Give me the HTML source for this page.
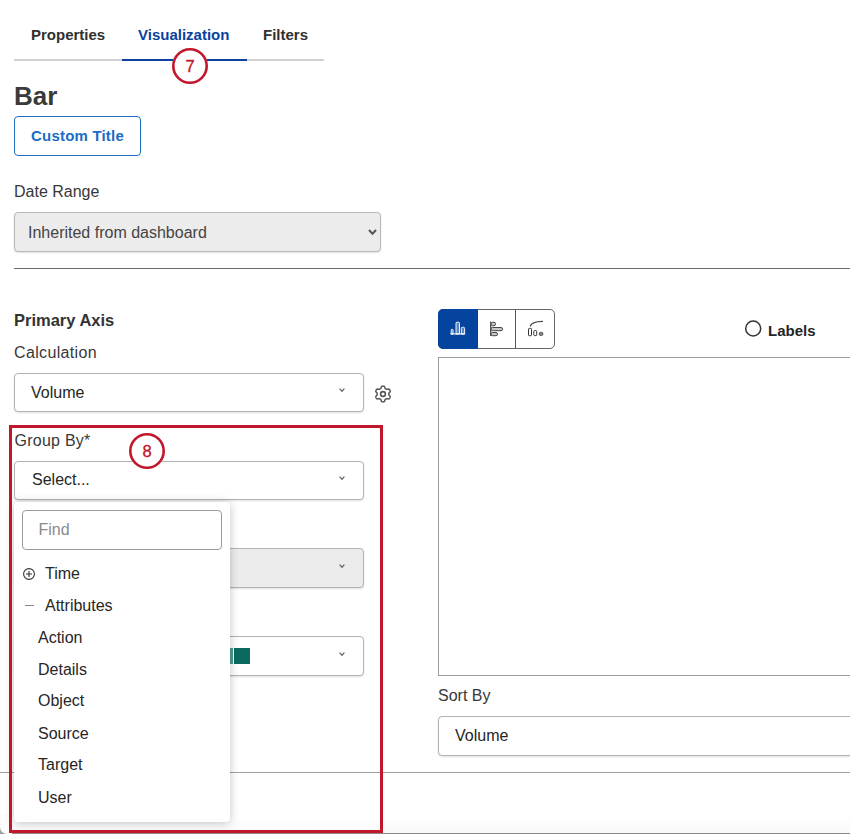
<!DOCTYPE html>
<html><head><meta charset="utf-8">
<style>
*{box-sizing:border-box;margin:0;padding:0}
html,body{width:850px;height:834px;overflow:hidden;background:#fff}
body{position:relative;font-family:"Liberation Sans",sans-serif;color:#333}
.a{position:absolute;white-space:nowrap;line-height:20px}
.tab{font-size:15px;font-weight:bold;color:#303030;top:25px}
.t16{font-size:16px;color:#383838}
.box{position:absolute;border:1px solid #b3b3b3;border-radius:4px;background:#fff;box-shadow:0 1px 2px rgba(0,0,0,.12)}
.badge{position:absolute;width:36px;height:36px;border-radius:50%;background:#fff;color:#c1172c;font-size:16.5px;text-align:center;line-height:37px;-webkit-text-stroke:0.35px #c1172c}
.badge svg{left:0;top:0}
.it{position:absolute;font-size:16px;color:#262626;left:38px;line-height:20px;white-space:nowrap}
svg{position:absolute;overflow:visible}
</style></head><body>
<!-- bottom -->
<div class="a" style="left:0;top:816px;width:850px;height:17px;background:linear-gradient(#fff,#f9f9f9)"></div>
<div class="a" style="left:0;top:833px;width:850px;height:1px;background:#8a8a8a"></div>
<div class="a" style="left:0;top:827px;width:10px;height:7px;background:#a0a0a0"></div>
<div class="a" style="left:0;top:814px;width:12px;height:19.5px;background:#fcfcfc;border-bottom-left-radius:7px"></div>
<!-- tabs -->
<div class="a tab" style="left:31px">Properties</div>
<div class="a tab" style="left:138px;color:#0a429c">Visualization</div>
<div class="a tab" style="left:263px">Filters</div>
<div class="a" style="left:14px;top:59px;width:310px;height:2px;background:#d2d2d2"></div>
<div class="a" style="left:122px;top:59px;width:125px;height:2px;background:#0a429c"></div>
<div class="badge" style="left:172px;top:48px"><svg width="36" height="36"><circle cx="18" cy="18" r="16.7" fill="none" stroke="#c1172c" stroke-width="2.6"/></svg>7</div>

<div class="a" style="left:14px;top:81px;font-size:26px;line-height:30px;font-weight:bold;color:#3a3a3a">Bar</div>
<div class="a" style="left:14px;top:116px;width:127px;height:40px;border:1px solid #1f6fc5;border-radius:4px"></div>
<div class="a" style="left:31px;top:126px;font-size:15px;font-weight:bold;color:#1a6cc4;letter-spacing:0.2px">Custom Title</div>

<div class="a t16" style="left:14px;top:182px">Date Range</div>
<div class="box" style="left:14px;top:212px;width:367px;height:40px;background:#ececec;border-color:#b8b8b8"></div>
<div class="a t16" style="left:28px;top:222.5px;color:#444">Inherited from dashboard</div>
<svg style="left:368px;top:229px" width="10" height="7"><polyline points="1,1 4.5,4.8 8,1" fill="none" stroke="#555" stroke-width="2"/></svg>

<div class="a" style="left:14px;top:268px;width:836px;height:1px;background:#6a6a6a"></div>

<div class="a" style="left:14px;top:310px;font-size:16.5px;font-weight:bold;color:#333">Primary Axis</div>
<div class="a t16" style="left:14px;top:343px;letter-spacing:0.35px">Calculation</div>
<div class="box" style="left:14px;top:373px;width:350px;height:39px"></div>
<div class="a t16" style="left:31px;top:382.7px;color:#262626">Volume</div>
<svg style="left:338.5px;top:388px" width="7" height="5"><polyline points="0.6,0.6 3,3.2 5.4,0.6" fill="none" stroke="#666" stroke-width="1.3"/></svg>
<svg style="left:383px;top:394px" width="1" height="1"><path d="M0.00,7.85 L-0.41,7.83 L-0.82,7.78 L-1.21,7.64 L-1.55,7.29 L-1.77,6.62 L-1.93,5.94 L-2.14,5.57 L-2.39,5.37 L-2.66,5.22 L-2.92,5.07 L-3.19,4.91 L-3.46,4.76 L-3.76,4.64 L-4.18,4.64 L-4.84,4.84 L-5.54,4.99 L-6.01,4.87 L-6.33,4.60 L-6.58,4.27 L-6.80,3.93 L-6.99,3.56 L-7.14,3.18 L-7.22,2.77 L-7.09,2.30 L-6.62,1.77 L-6.11,1.30 L-5.90,0.93 L-5.85,0.61 L-5.85,0.31 L-5.85,0.00 L-5.85,-0.31 L-5.85,-0.61 L-5.90,-0.93 L-6.11,-1.30 L-6.62,-1.77 L-7.09,-2.30 L-7.22,-2.77 L-7.14,-3.18 L-6.99,-3.56 L-6.80,-3.92 L-6.58,-4.27 L-6.33,-4.60 L-6.01,-4.87 L-5.54,-4.99 L-4.84,-4.84 L-4.18,-4.64 L-3.76,-4.64 L-3.46,-4.76 L-3.19,-4.91 L-2.92,-5.07 L-2.66,-5.22 L-2.39,-5.37 L-2.14,-5.57 L-1.93,-5.94 L-1.77,-6.62 L-1.55,-7.29 L-1.21,-7.64 L-0.82,-7.78 L-0.41,-7.83 L-0.00,-7.85 L0.41,-7.83 L0.82,-7.78 L1.21,-7.64 L1.55,-7.29 L1.77,-6.62 L1.93,-5.94 L2.14,-5.57 L2.39,-5.37 L2.66,-5.22 L2.92,-5.07 L3.19,-4.91 L3.46,-4.76 L3.76,-4.64 L4.18,-4.64 L4.84,-4.84 L5.54,-4.99 L6.01,-4.87 L6.33,-4.60 L6.58,-4.27 L6.80,-3.93 L6.99,-3.56 L7.14,-3.18 L7.22,-2.77 L7.09,-2.30 L6.62,-1.77 L6.11,-1.30 L5.90,-0.93 L5.85,-0.61 L5.85,-0.31 L5.85,-0.00 L5.85,0.31 L5.85,0.61 L5.90,0.93 L6.11,1.30 L6.62,1.77 L7.09,2.30 L7.22,2.77 L7.14,3.18 L6.99,3.56 L6.80,3.92 L6.58,4.27 L6.33,4.60 L6.01,4.87 L5.54,4.99 L4.84,4.84 L4.18,4.64 L3.76,4.64 L3.46,4.76 L3.19,4.91 L2.92,5.07 L2.66,5.22 L2.39,5.37 L2.14,5.57 L1.93,5.94 L1.77,6.62 L1.55,7.29 L1.21,7.64 L0.82,7.78 L0.41,7.83Z" fill="none" stroke="#555" stroke-width="1.5" stroke-linejoin="round" /><circle cx="0" cy="0" r="2.4" fill="none" stroke="#555" stroke-width="1.6"/></svg>

<!-- group by -->
<div class="a t16" style="left:14.5px;top:430.5px;letter-spacing:0.25px">Group By*</div>
<div class="box" style="left:14px;top:461px;width:350px;height:39px"></div>
<div class="a t16" style="left:32px;top:469.5px;color:#262626">Select...</div>
<svg style="left:338.5px;top:476px" width="7" height="5"><polyline points="0.6,0.6 3,3.2 5.4,0.6" fill="none" stroke="#666" stroke-width="1.3"/></svg>

<div class="box" style="left:14px;top:548px;width:350px;height:40px;background:#ececec"></div>
<svg style="left:338.5px;top:564px" width="7" height="5"><polyline points="0.6,0.6 3,3.2 5.4,0.6" fill="none" stroke="#666" stroke-width="1.3"/></svg>
<div class="box" style="left:14px;top:636px;width:350px;height:40px"></div>
<svg style="left:338.5px;top:652px" width="7" height="5"><polyline points="0.6,0.6 3,3.2 5.4,0.6" fill="none" stroke="#666" stroke-width="1.3"/></svg>
<div class="a" style="left:214px;top:648px;width:19px;height:16px;background:#4f9c90"></div>
<div class="a" style="left:234px;top:648px;width:16px;height:16px;background:#0b6a5e"></div>

<div class="a" style="left:0;top:772px;width:850px;height:1px;background:#a0a0a0"></div>

<div class="badge" style="left:129px;top:432.5px"><svg width="36" height="36"><circle cx="18" cy="18" r="16.7" fill="none" stroke="#c1172c" stroke-width="2.6"/></svg>8</div>

<!-- dropdown -->
<div class="a" style="left:14px;top:502px;width:216px;height:320px;background:#fff;border-radius:4px;box-shadow:0 1px 10px rgba(0,0,0,.24)"></div>
<div class="a" style="left:22px;top:510px;width:200px;height:40px;border:1px solid #9a9a9a;border-radius:4px"></div>
<div class="a t16" style="left:38.5px;top:519.5px;color:#8a8a8a">Find</div>
<svg style="left:23px;top:568px" width="12" height="12"><circle cx="6" cy="6" r="5.4" fill="none" stroke="#333" stroke-width="1.1"/><path d="M6,3V9M3,6H9" stroke="#333" stroke-width="1.1"/></svg>
<div class="it" style="left:45px;top:563.5px">Time</div>
<div class="a" style="left:25px;top:605.3px;width:9px;height:1.2px;background:#8a8a8a"></div>
<div class="it" style="left:45px;top:595.5px">Attributes</div>
<div class="it" style="top:627.5px">Action</div>
<div class="it" style="top:659.5px">Details</div>
<div class="it" style="top:691px">Object</div>
<div class="it" style="top:723.7px">Source</div>
<div class="it" style="top:755px">Target</div>
<div class="it" style="top:787.7px">User</div>

<!-- right side -->
<div class="a" style="left:438px;top:309px;width:117px;height:40px;border:1px solid #666;border-radius:5px"></div>
<div class="a" style="left:438px;top:309px;width:40px;height:40px;background:#04449f;border-radius:5px 0 0 5px"></div>
<div class="a" style="left:514.8px;top:310px;width:1px;height:38px;background:#555"></div>
<svg style="left:438px;top:309px" width="117" height="40">
 <g fill="rgba(255,255,255,.35)" stroke="#fff" stroke-width="0.9">
  <rect x="13.2" y="20.3" width="1.9" height="5" rx="0.9"/>
  <rect x="18" y="13.2" width="3.5" height="12" rx="1"/>
  <rect x="23.3" y="18.3" width="3.3" height="7" rx="1"/>
 </g>
 <rect x="12.4" y="24.2" width="14.8" height="1.4" fill="#fff" opacity=".85"/>
 <g fill="#c8c8c8" stroke="#444" stroke-width="1">
  <rect x="53" y="13.3" width="4.5" height="3.4" rx="1.5"/>
  <rect x="53" y="18.5" width="11.5" height="3.2" rx="1.5"/>
  <rect x="53" y="23.5" width="6.5" height="3.2" rx="1.5"/>
 </g>
 <rect x="52" y="12.6" width="1.4" height="14.4" fill="#555"/>
 <path d="M92.4,17 Q93.5,12.5 104.5,12.3" fill="none" stroke="#444" stroke-width="1.2" stroke-linecap="round"/>
 <g fill="none" stroke="#333" stroke-width="1">
  <rect x="90.5" y="19.4" width="3" height="7.3" rx="0.8"/>
  <rect x="95.8" y="21.6" width="2.9" height="5" rx="0.8"/>
 </g>
 <rect x="101.3" y="23.3" width="3.6" height="3.2" rx="1.4" fill="#888" stroke="#444" stroke-width="0.9"/>
</svg>
<svg style="left:745px;top:320px" width="17" height="17"><circle cx="8.2" cy="8.5" r="7.5" fill="none" stroke="#333" stroke-width="1.5"/></svg>
<div class="a" style="left:768px;top:320.7px;font-size:15px;font-weight:bold;color:#262626">Labels</div>
<div class="a" style="left:437.5px;top:356.8px;width:420px;height:319px;border:1px solid #9c9c9c"></div>
<div class="a t16" style="left:438px;top:685.5px">Sort By</div>
<div class="box" style="left:437.5px;top:716px;width:420px;height:40px"></div>
<div class="a t16" style="left:455px;top:725.7px;color:#262626">Volume</div>

<!-- bottom -->
<div class="a" style="left:9px;top:425px;width:374px;height:408px;border:3px solid #c1172c"></div>
</body></html>
